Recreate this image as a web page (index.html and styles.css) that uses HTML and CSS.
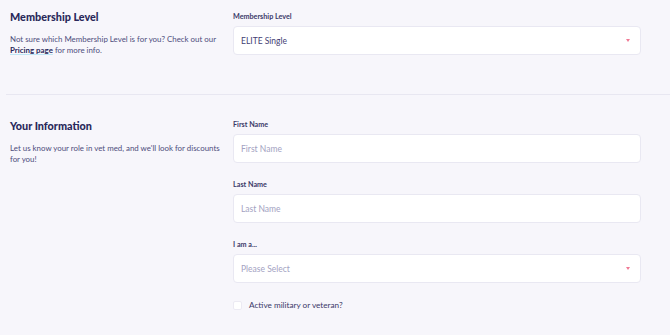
FILE: index.html
```html
<!DOCTYPE html>
<html lang="en">
<head>
    <meta charset="UTF-8">
    <meta name="viewport" content="width=device-width, initial-scale=1.0">
    <title>Membership Sign Up</title>
    <link rel="stylesheet" href="styles.css">
</head>
<body>
    <div class="section first">
        <div class="intro">
            <h2>Membership Level</h2>
            <p>Not sure which Membership Level is for you? Check out our <a href="#">Pricing page</a> for more info.</p>
        </div>
        <div class="fields">
            <div class="field">
                <label>Membership Level</label>
                <div class="input select">
                    <span class="value">ELITE Single</span>
                    <span class="caret"></span>
                </div>
            </div>
        </div>
    </div>

    <div class="divider"></div>

    <div class="section second">
        <div class="intro">
            <h2>Your Information</h2>
            <p>Let us know your role in vet med, and we'll look for discounts for you!</p>
        </div>
        <div class="fields">
            <div class="field">
                <label>First Name</label>
                <div class="input"><span class="placeholder">First Name</span></div>
            </div>
            <div class="field">
                <label>Last Name</label>
                <div class="input"><span class="placeholder">Last Name</span></div>
            </div>
            <div class="field">
                <label>I am a...</label>
                <div class="input select">
                    <span class="placeholder">Please Select</span>
                    <span class="caret"></span>
                </div>
            </div>
            <div class="check">
                <span class="box"></span>
                <span>Active military or veteran?</span>
            </div>
        </div>
    </div>
</body>
</html>
```

FILE: styles.css
```css
body {
    margin: 0;
    background-color: #f7f6fb;
    font-family: Lato, "Open Sans", sans-serif;
    color: #4b4a78;
}
.section {
    display: flex;
    gap: 7px;
    padding-left: 10px;
}
.first {
    padding-top: 11px;
    padding-bottom: 38px;
}
.second {
    padding-top: 24px;
}
.intro {
    width: 216px;
    flex-shrink: 0;
}
.first .intro {
    margin-top: -1px;
}
h2 {
    margin: 0;
    font-size: 10.8px;
    line-height: 14px;
    font-weight: 900;
    color: #29285a;
}
.intro p {
    margin: 10px 0 0;
    font-size: 7.9px;
    line-height: 11px;
    color: #4e4d7c;
}
.intro a {
    color: #29285a;
    font-weight: 700;
    text-decoration: underline;
    text-decoration-color: #bfe6f5;
}
.fields {
    width: 408px;
    display: flex;
    flex-direction: column;
    gap: 16px;
}
label {
    display: block;
    font-size: 7.2px;
    line-height: 11px;
    font-weight: 700;
    color: #3a3968;
    margin-bottom: 4px;
}
.input {
    height: 27px;
    border: 1px solid #e9e8f2;
    border-radius: 4px;
    background-color: #fff;
    display: flex;
    align-items: center;
    justify-content: space-between;
    padding: 0 10px 0 7px;
    font-size: 8.5px;
}
.value {
    color: #3f3d73;
}
.placeholder {
    color: #a3a2c2;
}
.caret {
    width: 0;
    height: 0;
    border-left: 2.5px solid transparent;
    border-right: 2.5px solid transparent;
    border-top: 3px solid #f07a95;
}
.divider {
    height: 1px;
    margin-left: 6px;
    background-color: #e8e7f1;
}
.check {
    display: flex;
    align-items: center;
    gap: 7px;
    margin-top: 1px;
    font-size: 8.2px;
    color: #3a3868;
}
.box {
    width: 7px;
    height: 7px;
    border: 1px solid #eceaf3;
    border-radius: 2px;
    background-color: #fff;
}
```
